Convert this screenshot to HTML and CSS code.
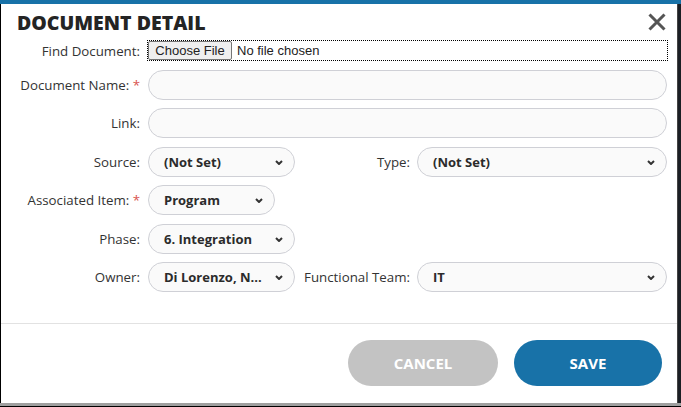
FILE: index.html
```html
<!DOCTYPE html>
<html lang="en">
<head>
<meta charset="utf-8">
<title>Document Detail</title>
<link rel="stylesheet" href="styles.css">
</head>
<body>
<div class="screen">
  <div class="frame">
    <div class="edge-left"></div>
    <div class="dialog">
      <div class="dialog-head">
        <h1 class="title">DOCUMENT DETAIL</h1>
        <button class="close" aria-label="Close">
          <svg width="18" height="18" viewBox="0 0 18 18"><path d="M1.5 1.5 L16.5 16.5 M16.5 1.5 L1.5 16.5" stroke="#555" stroke-width="3" fill="none"/></svg>
        </button>
      </div>
      <div class="form">
        <div class="row row-file">
          <label class="label">Find Document:</label>
          <div class="file">
            <span class="file-btn">Choose File</span>
            <span class="file-text">No file chosen</span>
          </div>
        </div>
        <div class="row">
          <label class="label">Document Name: <span class="req">*</span></label>
          <div class="input"></div>
        </div>
        <div class="row">
          <label class="label">Link:</label>
          <div class="input"></div>
        </div>
        <div class="row">
          <label class="label">Source:</label>
          <div class="select w147"><span>(Not Set)</span><svg class="chev" width="8" height="5" viewBox="0 0 8 5"><path d="M1 1 L4 4 L7 1" stroke="#333" stroke-width="2" fill="none"/></svg></div>
          <label class="label label2">Type:</label>
          <div class="select grow"><span>(Not Set)</span><svg class="chev" width="8" height="5" viewBox="0 0 8 5"><path d="M1 1 L4 4 L7 1" stroke="#333" stroke-width="2" fill="none"/></svg></div>
        </div>
        <div class="row">
          <label class="label">Associated Item: <span class="req">*</span></label>
          <div class="select w127"><span>Program</span><svg class="chev" width="8" height="5" viewBox="0 0 8 5"><path d="M1 1 L4 4 L7 1" stroke="#333" stroke-width="2" fill="none"/></svg></div>
        </div>
        <div class="row">
          <label class="label">Phase:</label>
          <div class="select w147"><span>6. Integration</span><svg class="chev" width="8" height="5" viewBox="0 0 8 5"><path d="M1 1 L4 4 L7 1" stroke="#333" stroke-width="2" fill="none"/></svg></div>
        </div>
        <div class="row">
          <label class="label">Owner:</label>
          <div class="select w147"><span>Di Lorenzo, N...</span><svg class="chev" width="8" height="5" viewBox="0 0 8 5"><path d="M1 1 L4 4 L7 1" stroke="#333" stroke-width="2" fill="none"/></svg></div>
          <label class="label label2">Functional Team:</label>
          <div class="select grow"><span>IT</span><svg class="chev" width="8" height="5" viewBox="0 0 8 5"><path d="M1 1 L4 4 L7 1" stroke="#333" stroke-width="2" fill="none"/></svg></div>
        </div>
      </div>
      <div class="footer">
        <button class="btn btn-cancel">CANCEL</button>
        <button class="btn btn-save">SAVE</button>
      </div>
    </div>
    <div class="edge-right"></div>
  </div>
  <div class="edge-bottom"></div>
</div>
</body>
</html>
```

FILE: styles.css
```css
* { box-sizing: border-box; }
html, body { margin: 0; padding: 0; }
body {
  width: 681px;
  height: 407px;
  overflow: hidden;
  background: #000;
  font-family: "Open Sans", sans-serif;
}
.screen {
  display: flex;
  flex-direction: column;
  width: 681px;
  height: 407px;
}
.frame {
  display: flex;
  height: 403px;
  border-top: 4px solid #1872a8;
}
.edge-left {
  width: 1px;
  background: #000;
}
.edge-right {
  width: 4px;
  background: #1b1f24;
  border-left: 1px solid #444;
}
.edge-bottom {
  height: 4px;
  background: #9f9f9f;
  border-bottom: 1px solid #000;
}
.dialog {
  flex: 1;
  background: #fff;
  display: flex;
  flex-direction: column;
}
.dialog-head {
  display: flex;
  justify-content: space-between;
  align-items: flex-start;
  padding: 5px 11px 0 16px;
}
.title {
  margin: 0;
  font-size: 19.5px;
  line-height: 27px;
  font-weight: 800;
  color: #242424;
  letter-spacing: 0;
}
.close {
  border: 0;
  background: none;
  padding: 0;
  margin-top: 4px;
  width: 18px;
  height: 18px;
  display: flex;
}
.form {
  display: flex;
  flex-direction: column;
  gap: 8.4px;
  padding: 5px 10px 0 0;
}
.row {
  display: flex;
  align-items: center;
  height: 30px;
}
.row-file {
  height: 19px;
  margin-bottom: 1.6px;
}
.label {
  width: 139px;
  flex: none;
  text-align: right;
  font-size: 13.3px;
  color: #333;
  margin-right: 8px;
  white-space: nowrap;
}
.label2 {
  width: 115px;
  margin-right: 7px;
}
.req { color: #d9534f; }
.file {
  flex: 1;
  height: 19px;
  display: flex;
  align-items: center;
  outline: 1px dotted #000;
  font-family: "Liberation Sans", Arial, sans-serif;
  font-size: 13px;
  color: #222;
}
.file-btn {
  height: 19px;
  width: 84px;
  display: flex;
  align-items: center;
  justify-content: center;
  background: #efefef;
  border: 1px solid #767676;
  border-radius: 2px;
}
.file-text { margin-left: 5px; }
.input {
  flex: 1;
  height: 30px;
  border: 1px solid #cfd0d6;
  border-radius: 15px;
  background: #fafafa;
}
.select {
  height: 30px;
  border: 1px solid #cfd0d6;
  border-radius: 15px;
  background: #fafafa;
  display: flex;
  align-items: center;
  justify-content: space-between;
  padding: 0 11px 0 15px;
  font-size: 13px;
  font-weight: 700;
  color: #2b2b2b;
  white-space: nowrap;
}
.w147 { width: 147px; flex: none; }
.w127 { width: 127px; flex: none; }
.grow { flex: 1; }
.chev { flex: none; margin-top: 1px; }
.footer {
  margin-top: auto;
  border-top: 1px solid #e2e2e2;
  display: flex;
  justify-content: flex-end;
  gap: 16px;
  padding: 16px 15px 17px 0;
}
.btn {
  height: 46px;
  border: 0;
  border-radius: 23px;
  font-family: "Open Sans", sans-serif;
  font-weight: 700;
  font-size: 15px;
  color: #fff;
  letter-spacing: 0;
}
.btn-cancel { width: 150px; background: #c3c3c3; }
.btn-save { width: 148px; background: #1872a8; }
```
